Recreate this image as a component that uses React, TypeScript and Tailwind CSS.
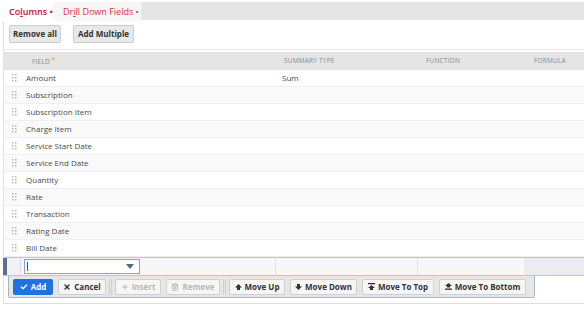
import { Check, X, Plus, Trash2 } from "lucide-react";

const fields = [
  "Amount",
  "Subscription",
  "Subscription Item",
  "Charge Item",
  "Service Start Date",
  "Service End Date",
  "Quantity",
  "Rate",
  "Transaction",
  "Rating Date",
  "Bill Date",
];

const cols = "grid grid-cols-[17px_254px_142px_107px_1fr]";

function Handle() {
  return (
    <svg width="5" height="8" viewBox="0 0 5 8" className="ml-[8px]">
      {[0, 3, 6].map((y) => (
        <g key={y} fill="#b5b5b5">
          <rect x="0" y={y} width="1.5" height="1.5" />
          <rect x="3" y={y} width="1.5" height="1.5" />
        </g>
      ))}
    </svg>
  );
}

function Btn({
  w,
  icon,
  label,
  disabled,
}: {
  w: string;
  icon: React.ReactNode;
  label: string;
  disabled?: boolean;
}) {
  return (
    <div
      className={`${w} h-[16px] flex items-center justify-center gap-[3px] rounded-[2px] border border-[#d0d0d0] bg-[#f6f6f6] text-[8px] font-bold ${
        disabled ? "text-[#b8b8b8]" : "text-[#333]"
      }`}
    >
      {icon}
      {label}
    </div>
  );
}

function Sep() {
  return <div className="h-[16px] w-[3px] border-x border-[#cfcfcf] -mx-[2px]" />;
}

export default function App() {
  return (
    <div
      className="w-[584px] h-[315px] bg-white overflow-hidden"
      style={{ fontFamily: '"Open Sans", sans-serif' }}
    >
      {/* tabs */}
      <div className="flex h-[21px] pt-[2px]">
        <div className="ml-[3px] w-[50px] h-[19px] bg-white flex items-center pl-[6px] pt-[1px] text-[9px] font-semibold text-[#c8102e]">
          Co<span className="underline">l</span>umns •
        </div>
        <div className="w-[88px] h-[19px] bg-[#f7f7f7] flex items-center pl-[10px] pt-[1px] text-[9px] text-[#d6333f]">
          Dr<span className="underline">i</span>ll Down Fields •
        </div>
        <div className="flex-1 h-[18px] bg-[#e5e5e5]" />
      </div>

      <div className="ml-[3px] border-l border-[#e3e3e3]">
        {/* actions */}
        <div className="flex gap-[12px] pl-[5px] pt-[4px] h-[29px] border-b border-[#e8e8e8]">
          <div className="w-[52px] h-[18px] flex items-center justify-center rounded-[2px] border border-[#cdcdcd] bg-[#e8e8e8] text-[8px] font-bold text-[#333]">
            Remove all
          </div>
          <div className="w-[61px] h-[18px] flex items-center justify-center rounded-[2px] border border-[#cdcdcd] bg-[#e8e8e8] text-[8px] font-bold text-[#333]">
            Add Multiple
          </div>
        </div>

        {/* header */}
        <div className={`${cols} mt-[2px] h-[18px] items-center bg-[#e5e5e5] text-[6.5px] text-[#8a8a8a] tracking-[0.2px]`}>
          <div />
          <div className="pl-[11px]">
            FIELD<span className="text-[#e8a020] text-[8px] ml-[1px] relative -top-[2px]">*</span>
          </div>
          <div className="pl-[9px]">SUMMARY TYPE</div>
          <div className="pl-[9px]">FUNCTION</div>
          <div className="pl-[10px]">FORMULA</div>
        </div>

        {/* rows */}
        {fields.map((f, i) => (
          <div
            key={f}
            className={`${cols} h-[17px] items-center border-b border-[#efefef] text-[8px] text-[#4a4a4a] ${
              i % 2 === 1 ? "bg-[#fafafa]" : "bg-white"
            }`}
          >
            <Handle />
            <div className="pl-[5px]">{f}</div>
            <div className="pl-[7px]">{i === 0 ? "Sum" : ""}</div>
            <div />
            <div />
          </div>
        ))}

        {/* edit row */}
        <div className={`${cols} h-[19px] border-y border-[#b9c5d8] bg-[#f7f7f7]`}>
          <div className="border-l-[4px] border-[#5c6f8e] border-r border-r-[#dcdcdc] bg-[#f2f2f2] -ml-[1px]" />
          <div className="flex items-center pl-[3px]">
            <div className="w-[116px] h-[15px] bg-white border border-[#7fa6dc] flex items-center justify-between px-[2px]">
              <div className="w-[1px] h-[9px] bg-[#1c5fc4]" />
              <svg width="8" height="5" viewBox="0 0 8 5" className="mr-[3px]">
                <path d="M0 0 H8 L4 5 Z" fill="#4f6b8f" />
              </svg>
            </div>
          </div>
          <div className="border-l border-[#e3e3e3]" />
          <div className="border-l border-[#e3e3e3]" />
          <div className="bg-[#ececec]" />
        </div>

        {/* toolbar */}
        <div className="ml-[4px] w-[527px] h-[22px] flex items-center gap-[5px] pl-[4px] border border-t-0 border-[#aab5c6] bg-[#e6e6e6] rounded-b-[2px]">
          <div className="w-[40px] h-[16px] flex items-center justify-center gap-[3px] rounded-[2px] bg-[#1f72df] text-[8px] font-bold text-white">
            <Check size={8} strokeWidth={4} />
            Add
          </div>
          <Btn w="w-[48px]" icon={<X size={8} strokeWidth={4} />} label="Cancel" />
          <Sep />
          <Btn w="w-[46px]" icon={<Plus size={8} strokeWidth={3} />} label="Insert" disabled />
          <Btn w="w-[54px]" icon={<Trash2 size={8} strokeWidth={3} />} label="Remove" disabled />
          <Sep />
          <Btn
            w="w-[56px]"
            icon={
              <svg width="7" height="6" viewBox="0 0 7 6">
                <path d="M3.5 0 L7 3.5 H5 V6 H2 V3.5 H0 Z" fill="#333" />
              </svg>
            }
            label="Move Up"
          />
          <Btn
            w="w-[67px]"
            icon={
              <svg width="7" height="6" viewBox="0 0 7 6">
                <path d="M3.5 6 L7 2.5 H5 V0 H2 V2.5 H0 Z" fill="#333" />
              </svg>
            }
            label="Move Down"
          />
          <Btn
            w="w-[72px]"
            icon={
              <svg width="7" height="7" viewBox="0 0 7 7">
                <rect x="0" y="0" width="7" height="1.3" fill="#333" />
                <path d="M3.5 2 L7 5 H5 V7 H2 V5 H0 Z" fill="#333" />
              </svg>
            }
            label="Move To Top"
          />
          <Btn
            w="w-[87px]"
            icon={
              <svg width="7" height="7" viewBox="0 0 7 7">
                <path d="M3.5 0 L7 3 H5 V4.5 H2 V3 H0 Z" fill="#333" />
                <rect x="0" y="5.5" width="7" height="1.3" fill="#333" />
              </svg>
            }
            label="Move To Bottom"
          />
        </div>

        <div className="mt-[5px] border-b border-[#dedede]" />
      </div>
    </div>
  );
}
